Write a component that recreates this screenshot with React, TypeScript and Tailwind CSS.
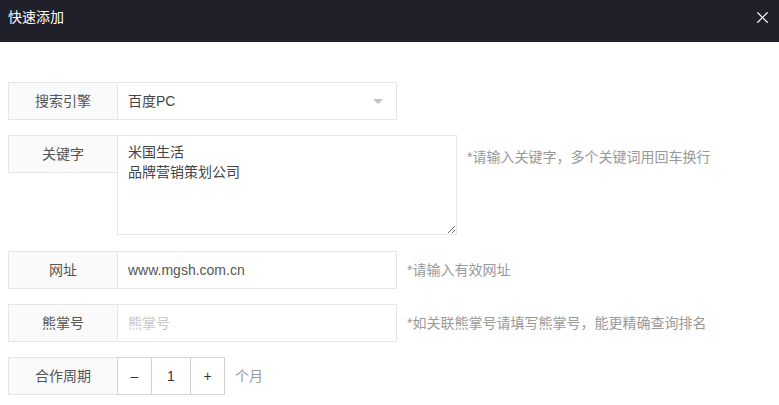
import { X } from 'lucide-react';

const font = { fontFamily: '"Liberation Sans", "Noto Sans CJK SC", sans-serif' };

function Label({ text }: { text: string }) {
  return (
    <div className="flex h-[38px] w-[110px] shrink-0 items-center justify-center border border-[#e6e6e6] bg-[#fafafa] text-[14px] text-[#555]">
      {text}
    </div>
  );
}

function Hint({ text }: { text: string }) {
  return <span className="ml-[10px] text-[14px] text-[#999]">{text}</span>;
}

export default function App() {
  return (
    <div className="h-[405px] w-[779px] overflow-hidden bg-white" style={font}>
      <div className="flex h-[42px] items-center justify-between bg-[#1f2029] pl-[8px] pr-[7px] pb-[7px]">
        <span className="text-[14px] text-white">快速添加</span>
        <X size={19} strokeWidth={1.5} className="text-white" />
      </div>

      <div className="flex flex-col gap-[15px] px-[8px] pt-[40px]">
        <div className="flex items-center">
          <Label text="搜索引擎" />
          <div className="-ml-px flex h-[38px] w-[280px] items-center justify-between border border-[#e6e6e6] pl-[10px] pr-[13px] text-[14px] text-[#444]">
            <span>百度PC</span>
            <span className="h-0 w-0 border-x-[5px] border-t-[5px] border-x-transparent border-t-[#c2c2c2]" />
          </div>
        </div>

        <div className="flex items-start">
          <Label text="关键字" />
          <textarea
            className="-ml-px h-[100px] w-[340px] border border-[#e6e6e6] px-[10px] py-[6px] text-[14px] leading-[20px] text-[#444] outline-none"
            defaultValue={'米国生活\n品牌营销策划公司'}
            style={font}
          />
          <span className="pt-[10px]">
            <Hint text="*请输入关键字，多个关键词用回车换行" />
          </span>
        </div>

        <div className="flex items-center pt-px">
          <Label text="网址" />
          <div className="-ml-px flex h-[38px] w-[280px] items-center border border-[#e6e6e6] pl-[10px] text-[14px] text-[#555]">
            www.mgsh.com.cn
          </div>
          <Hint text="*请输入有效网址" />
        </div>

        <div className="flex items-center">
          <Label text="熊掌号" />
          <div className="-ml-px flex h-[38px] w-[280px] items-center border border-[#e6e6e6] pl-[10px] text-[14px] text-[#c8c8c8]">
            熊掌号
          </div>
          <Hint text="*如关联熊掌号请填写熊掌号，能更精确查询排名" />
        </div>

        <div className="flex items-center">
          <Label text="合作周期" />
          <div className="-ml-px flex h-[38px] border border-[#d2d2d2] text-[14px] text-[#333]">
            <div className="flex w-[34px] items-center justify-center border-r border-[#d2d2d2]">–</div>
            <div className="flex w-[39px] items-center justify-center border-r border-[#d2d2d2]">1</div>
            <div className="flex w-[33px] items-center justify-center">+</div>
          </div>
          <span className="ml-[10px] text-[14px] text-[#999]">个月</span>
        </div>
      </div>
    </div>
  );
}
